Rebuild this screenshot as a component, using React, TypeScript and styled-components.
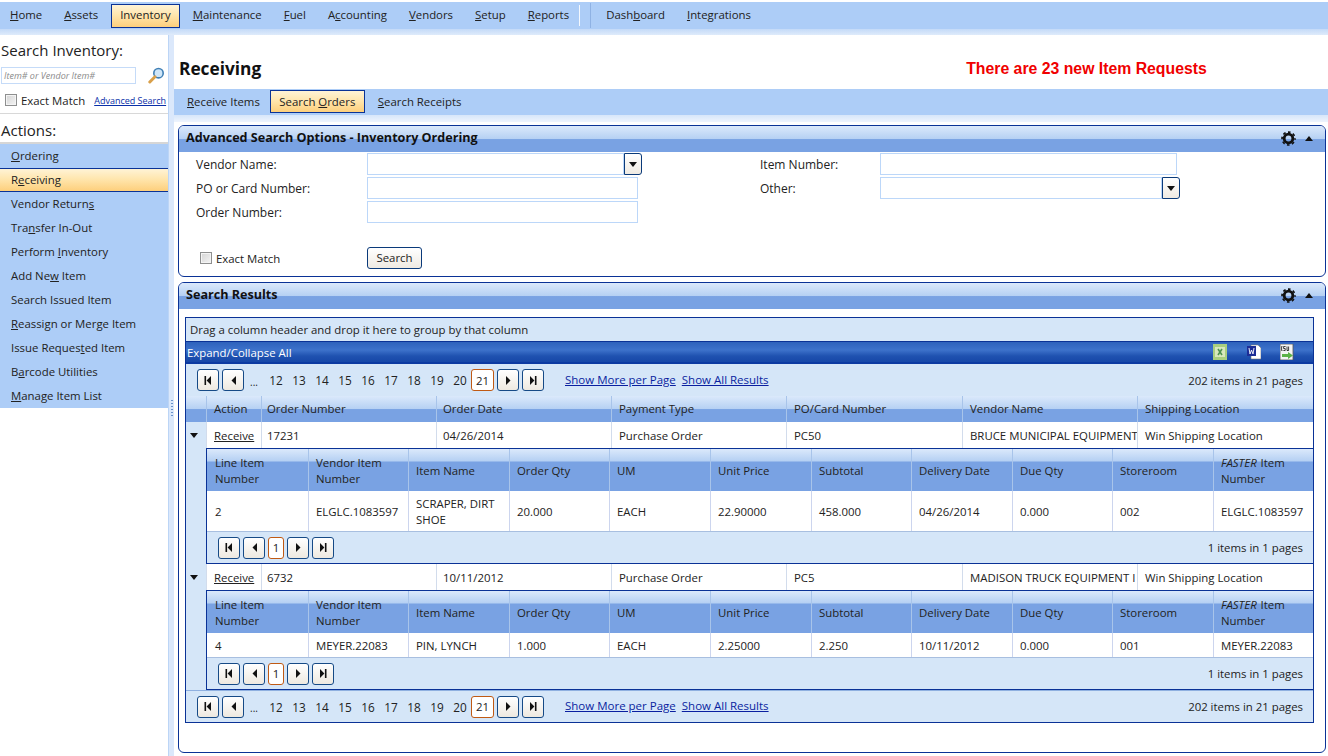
import React from 'react';
import styled, { createGlobalStyle } from 'styled-components';

const GlobalStyle = createGlobalStyle`
  html, body {
    margin: 0;
    padding: 0;
    background: #fff;
  }
  body {
    font-family: "Open Sans", "Noto Sans", "Liberation Sans", sans-serif;
    font-size: 11.4px;
    color: #222;
    overflow: hidden;
  }
  * {
    box-sizing: border-box;
  }
`;

const orangeGradient = 'linear-gradient(180deg, #fff3d6 0%, #ffe6ae 45%, #fdcf7c 100%)';
const barGradient = 'linear-gradient(180deg, #dbe9fb 0%, #b5d0f3 50%, #79a2e3 52%, #79a2e3 100%)';

type Accel = [string, string?, string?];

const label = ([before, mid, after]: Accel) => (
  <>
    {before}
    {mid ? <u>{mid}</u> : null}
    {after}
  </>
);

const menuItems: Accel[] = [
  ['', 'H', 'ome'],
  ['', 'A', 'ssets'],
  ['Inventory'],
  ['', 'M', 'aintenance'],
  ['', 'F', 'uel'],
  ['A', 'c', 'counting'],
  ['', 'V', 'endors'],
  ['', 'S', 'etup'],
  ['', 'R', 'eports'],
];

const actions: Accel[] = [
  ['', 'O', 'rdering'],
  ['R', 'e', 'ceiving'],
  ['Vendor Return', 's'],
  ['Tra', 'n', 'sfer In-Out'],
  ['Perform ', 'I', 'nventory'],
  ['Add Ne', 'w', ' Item'],
  ['Search Issued Item'],
  ['', 'R', 'eassign or Merge Item'],
  ['Issue Reques', 't', 'ed Item'],
  ['B', 'a', 'rcode Utilities'],
  ['', 'M', 'anage Item List'],
];

const masterCols = '20px 55px 175px 175px 175px 176px 175px 1fr';
const detailCols = '101px 100px 101px 100px 101px 101px 100px 101px 100px 101px 1fr';
const detailHead = [
  'Line Item Number',
  'Vendor Item Number',
  'Item Name',
  'Order Qty',
  'UM',
  'Unit Price',
  'Subtotal',
  'Delivery Date',
  'Due Qty',
  'Storeroom',
];
const pages = ['12', '13', '14', '15', '16', '17', '18', '19', '20'];

const First = () => (
  <svg width="8" height="9" viewBox="0 0 8 9">
    <path d="M0.5 0h1.6v9H0.5zM7 0v9L2.6 4.5z" fill="#111" />
  </svg>
);
const Prev = () => (
  <svg width="5" height="9" viewBox="0 0 5 9">
    <path d="M5 0v9L0.5 4.5z" fill="#111" />
  </svg>
);
const Next = () => (
  <svg width="5" height="9" viewBox="0 0 5 9">
    <path d="M0 0v9l4.5-4.5z" fill="#111" />
  </svg>
);
const Last = () => (
  <svg width="8" height="9" viewBox="0 0 8 9">
    <path d="M1 0v9l4.4-4.5zM5.9 0h1.6v9H5.9z" fill="#111" />
  </svg>
);

const Pager: React.FC<{ small?: boolean }> = ({ small }) => (
  <PagerButtons>
    <PageBtn>
      <First />
    </PageBtn>
    <PageBtn>
      <Prev />
    </PageBtn>
    {small ? null : <Dots>...</Dots>}
    {small ? null : pages.map((p) => <PageNum key={p}>{p}</PageNum>)}
    <Current $small={small}>{small ? '1' : '21'}</Current>
    <PageBtn>
      <Next />
    </PageBtn>
    <PageBtn>
      <Last />
    </PageBtn>
  </PagerButtons>
);

const MainPager: React.FC<{ bottom?: boolean }> = ({ bottom }) => (
  <MainPagerRow $bottom={bottom}>
    <Pager />
    <PagerLinks>
      <a>Show More per Page</a>
      <a>Show All Results</a>
    </PagerLinks>
    <Count>202 items in 21 pages</Count>
  </MainPagerRow>
);

type DetailProps = {
  row: string[];
  tall?: boolean;
};

const Detail: React.FC<DetailProps> = ({ row, tall }) => (
  <DetailWrap>
    <DetailHead>
      {detailHead.map((h) => (
        <DetailHeadCell key={h}>{h}</DetailHeadCell>
      ))}
      <DetailHeadCell>
        <span>
          <Faster>FASTER</Faster> Item
          <br />
          Number
        </span>
      </DetailHeadCell>
    </DetailHead>
    <DetailRow $tall={tall}>
      {row.map((c, i) => (
        <DetailCell key={i}>{c}</DetailCell>
      ))}
    </DetailRow>
    <DetailPager>
      <Pager small />
      <Count>1 items in 1 pages</Count>
    </DetailPager>
  </DetailWrap>
);

const MasterRow: React.FC<{ cells: string[] }> = ({ cells }) => (
  <MasterRowWrap>
    <Toggle>
      <svg width="8" height="5" viewBox="0 0 8 5">
        <path d="M0 0h8L4 5z" fill="#111" />
      </svg>
    </Toggle>
    <MasterCell>
      <u>Receive</u>
    </MasterCell>
    {cells.map((c, i) => (
      <MasterCell key={i}>{c}</MasterCell>
    ))}
  </MasterRowWrap>
);

const PanelTools = () => (
  <Tools>
    <svg width="15" height="15" viewBox="0 0 16 16">
      <circle cx="8" cy="8" r="4.6" fill="none" stroke="#111" strokeWidth="3" />
      <circle cx="8" cy="8" r="6.9" fill="none" stroke="#111" strokeWidth="1.8" strokeDasharray="2.8 2.62" strokeDashoffset="1.4" />
    </svg>
    <svg width="8" height="5" viewBox="0 0 8 5">
      <path d="M0 5h8L4 0z" fill="#111" />
    </svg>
  </Tools>
);

const ComboArrow = () => (
  <ComboBtn>
    <svg width="8" height="5" viewBox="0 0 8 5">
      <path d="M0 0h8L4 5z" fill="#111" />
    </svg>
  </ComboBtn>
);

export default function App() {
  return (
    <Page>
      <GlobalStyle />
      <TopBar>
        {menuItems.map((m) => (
          <MenuItem key={m.join('')} $active={m[0] === 'Inventory'}>
            {label(m)}
          </MenuItem>
        ))}
        <MenuDivider />
        <MenuDividerDark />
        <MenuItem>
          Dash<u>b</u>oard
        </MenuItem>
        <MenuItem>
          <u>I</u>ntegrations
        </MenuItem>
      </TopBar>
      <Shade />
      <Body>
        <Sidebar>
          <SideTitle>Search Inventory:</SideTitle>
          <SearchRow>
            <SearchInput>Item# or Vendor Item#</SearchInput>
            <svg width="17" height="17" viewBox="0 0 17 17">
              <circle cx="10.5" cy="6.2" r="4.7" fill="#cfe6f8" stroke="#3f7fb5" strokeWidth="1.6" />
              <path d="M7 9.8L1.8 15" stroke="#d9a04a" strokeWidth="3" strokeLinecap="round" />
            </svg>
          </SearchRow>
          <MatchRow>
            <CheckBox />
            <span>Exact Match</span>
            <SmallLink>Advanced Search</SmallLink>
          </MatchRow>
          <ActionsTitle>Actions:</ActionsTitle>
          <ActionList>
            {actions.map((a) => (
              <ActionItem key={a.join('')} $active={a.join('') === 'Receiving'}>
                {label(a)}
              </ActionItem>
            ))}
          </ActionList>
        </Sidebar>
        <Splitter>
          <Grip />
        </Splitter>
        <Main>
          <TitleRow>
            <h1>Receiving</h1>
            <Notice>There are 23 new Item Requests</Notice>
          </TitleRow>
          <Tabs>
            <Tab>
              <u>R</u>eceive Items
            </Tab>
            <Tab $active>
              Search <u>O</u>rders
            </Tab>
            <Tab>
              <u>S</u>earch Receipts
            </Tab>
          </Tabs>
          <TabShade />
          <Panel>
            <PanelHead>
              <PanelTitle>Advanced Search Options - Inventory Ordering</PanelTitle>
              <PanelTools />
            </PanelHead>
            <SearchForm>
              <FormLabel>Vendor Name:</FormLabel>
              <ComboField>
                <TextField $width={257} />
                <ComboArrow />
              </ComboField>
              <FormLabel>Item Number:</FormLabel>
              <TextField $width={297} />
              <FormLabel>PO or Card Number:</FormLabel>
              <TextField $width={271} />
              <FormLabel>Other:</FormLabel>
              <ComboField>
                <TextField $width={282} />
                <ComboArrow />
              </ComboField>
              <FormLabel>Order Number:</FormLabel>
              <TextField $width={271} />
            </SearchForm>
            <SearchActions>
              <FormCheck>
                <CheckBox />
                <span>Exact Match</span>
              </FormCheck>
              <SearchButton>Search</SearchButton>
            </SearchActions>
          </Panel>
          <ResultsPanel>
            <PanelHead>
              <PanelTitle>Search Results</PanelTitle>
              <PanelTools />
            </PanelHead>
            <Grid>
              <GroupBar>Drag a column header and drop it here to group by that column</GroupBar>
              <ExpandBar>
                Expand/Collapse All
                <ExportIcons>
                  <svg width="14" height="16" viewBox="0 0 14 16">
                    <rect width="14" height="16" fill="#a9cf7f" />
                    <path d="M2 3h10v10H2z" fill="#d8e8bd" />
                    <path d="M5 5l4 6M9 5l-4 6" stroke="#4f9350" strokeWidth="1.6" />
                  </svg>
                  <svg width="14" height="16" viewBox="0 0 14 16">
                    <path d="M4 1h7l3 3v11H4z" fill="#fff" stroke="#777" strokeWidth="0.6" />
                    <rect y="2" width="9" height="10" fill="#1c2d96" />
                    <path d="M2 4l1 6 1.5-4L6 10l1-6" stroke="#fff" strokeWidth="0.9" fill="none" />
                  </svg>
                  <svg width="14" height="16" viewBox="0 0 14 16">
                    <rect width="13" height="16" fill="#f4f4f4" stroke="#555" strokeWidth="0.8" />
                    <path d="M2.4 2.5H1.6v4h.8M5.6 2.5h-2v2h1.6v2H3.4M7 2.5v4h1.6v-4" stroke="#111" strokeWidth="0.8" fill="none" />
                    <path d="M2 10h6V8l5 3.5L8 15v-2H2z" fill="#5cb247" />
                  </svg>
                </ExportIcons>
              </ExpandBar>
              <MainPager />
              <MasterHead>
                <MasterHeadCell />
                {['Action', 'Order Number', 'Order Date', 'Payment Type', 'PO/Card Number', 'Vendor Name', 'Shipping Location'].map((h) => (
                  <MasterHeadCell key={h}>{h}</MasterHeadCell>
                ))}
              </MasterHead>
              <MasterRow
                cells={['17231', '04/26/2014', 'Purchase Order', 'PC50', 'BRUCE MUNICIPAL EQUIPMENT', 'Win Shipping Location']}
              />
              <NestedRow>
                <Detail
                  tall
                  row={['2', 'ELGLC.1083597', 'SCRAPER, DIRT SHOE', '20.000', 'EACH', '22.90000', '458.000', '04/26/2014', '0.000', '002', 'ELGLC.1083597']}
                />
              </NestedRow>
              <MasterRow
                cells={['6732', '10/11/2012', 'Purchase Order', 'PC5', 'MADISON TRUCK EQUIPMENT I', 'Win Shipping Location']}
              />
              <NestedRow>
                <Detail
                  row={['4', 'MEYER.22083', 'PIN, LYNCH', '1.000', 'EACH', '2.25000', '2.250', '10/11/2012', '0.000', '001', 'MEYER.22083']}
                />
              </NestedRow>
              <MainPager bottom />
            </Grid>
          </ResultsPanel>
        </Main>
      </Body>
    </Page>
  );
}

const Page = styled.div`
  width: 1328px;
  height: 756px;
  overflow: hidden;
`;

const TopBar = styled.div`
  height: 27px;
  margin-top: 2px;
  padding-left: 1px;
  background: #adcdf7;
  display: flex;
  align-items: center;
`;

const Shade = styled.div`
  height: 6px;
  background: linear-gradient(180deg, #c4daf8 0%, #dfebfb 100%);
`;

const MenuItem = styled.div<{ $active?: boolean }>`
  height: 24px;
  padding: 0 8px 2px;
  margin-right: 4px;
  display: flex;
  align-items: center;
  white-space: pre;
  border: 1px solid ${(p) => (p.$active ? '#0a3296' : 'transparent')};
  background: ${(p) => (p.$active ? orangeGradient : 'transparent')};
`;

const MenuDivider = styled.div`
  width: 1px;
  height: 21px;
  margin: 0 10px 0 -3px;
  background: #f4f8fe;
`;

const MenuDividerDark = styled.div`
  width: 1px;
  height: 25px;
  margin-right: 6px;
  background: #8fb2e4;
`;

const Body = styled.div`
  display: flex;
  height: 721px;
`;

const Sidebar = styled.div`
  width: 168px;
  flex: none;
`;

const SideTitle = styled.div`
  font-size: 15px;
  line-height: 20px;
  padding: 5px 0 0 1px;
`;

const SearchRow = styled.div`
  display: flex;
  align-items: center;
  gap: 12px;
  margin: 7px 0 0 1px;
`;

const SearchInput = styled.div`
  width: 135px;
  height: 17px;
  padding-left: 2px;
  border: 1px solid #c5dbf8;
  color: #8a8a8a;
  font-size: 9px;
  font-style: italic;
  line-height: 15px;
`;

const MatchRow = styled.div`
  height: 30px;
  display: flex;
  align-items: center;
  gap: 4px;
  padding: 3px 0 0 5px;
  border-bottom: 1px solid #d8d8d8;
  white-space: nowrap;
`;

const CheckBox = styled.div`
  width: 12px;
  height: 12px;
  flex: none;
  border: 1px solid #8e8f8f;
  background: linear-gradient(135deg, #d4d4d4, #f4f4f4);
  box-shadow: inset 0 0 0 1px #f4f4f4;
`;

const SmallLink = styled.a`
  margin-left: 5px;
  color: #0a2fa8;
  font-size: 9px;
  text-decoration: underline;
`;

const ActionsTitle = styled.div`
  font-size: 15px;
  line-height: 20px;
  padding: 6px 0 2px 1px;
  border-bottom: 2px solid #d6d6d6;
`;

const ActionList = styled.div`
  background: #adcdf7;
`;

const ActionItem = styled.div<{ $active?: boolean }>`
  height: 24px;
  padding: 0 0 2px 11px;
  display: flex;
  align-items: center;
  white-space: pre;
  border: solid ${(p) => (p.$active ? '#0a3296' : 'transparent')};
  border-width: 1px 0;
  background: ${(p) => (p.$active ? orangeGradient : 'transparent')};
`;

const Splitter = styled.div`
  width: 6px;
  flex: none;
  background: #dbe8fb;
  border-left: 1px solid #bcd5f6;
  display: flex;
  align-items: center;
  justify-content: center;
`;

const Grip = styled.div`
  width: 2px;
  height: 17px;
  margin-top: 26px;
  background: repeating-linear-gradient(180deg, #6b93cc 0 1px, transparent 1px 3px);
`;

const Main = styled.div`
  flex: 1;
  min-width: 0;
`;

const TitleRow = styled.div`
  height: 54px;
  padding: 12px 0 0 5px;
  display: flex;
  align-items: center;

  h1 {
    margin: 0;
    font-size: 17.3px;
    font-weight: 700;
    color: #111;
  }
`;

const Notice = styled.div`
  margin: 2px 0 0 705px;
  color: #f00000;
  font-size: 15.8px;
  font-weight: 700;
  font-family: "Liberation Sans", sans-serif;
`;

const Tabs = styled.div`
  height: 26px;
  background: #adcdf7;
  display: flex;
  align-items: flex-start;
  padding: 1px 0 0 4px;
`;

const Tab = styled.div<{ $active?: boolean }>`
  width: ${(p) => (p.$active ? '95px' : 'auto')};
  height: 23px;
  padding: 0 8px 1px;
  margin-right: ${(p) => (p.$active ? '4px' : '1px')};
  white-space: pre;
  display: flex;
  align-items: center;
  justify-content: center;
  border: 1px solid ${(p) => (p.$active ? '#0a3296' : 'transparent')};
  background: ${(p) => (p.$active ? orangeGradient : 'transparent')};
`;

const TabShade = styled(Shade)`
  height: 7px;
  background: linear-gradient(180deg, #d7e6fa 0%, #eef4fd 100%);
`;

const Panel = styled.div`
  height: 152px;
  margin: 3px 2px 5px 4px;
  border: 1px solid #0a3296;
  border-radius: 6px;
  overflow: hidden;
`;

const ResultsPanel = styled(Panel)`
  height: 471px;
  margin-top: 0;
  margin-bottom: 0;
`;

const PanelHead = styled.div`
  height: 26px;
  padding: 0 12px 0 7px;
  display: flex;
  align-items: center;
  justify-content: space-between;
  background: ${barGradient};
`;

const PanelTitle = styled.div`
  margin-bottom: 4px;
  font-weight: 700;
  font-size: 12.6px;
  color: #111;
`;

const Tools = styled.div`
  display: flex;
  align-items: center;
  gap: 9px;
  margin-bottom: 2px;
`;

const SearchForm = styled.div`
  display: grid;
  grid-template-columns: 171px 393px 120px 1fr;
  grid-auto-rows: 24px;
  padding: 1px 0 0 17px;
`;

const FormLabel = styled.div`
  display: flex;
  align-items: center;
  padding-bottom: 2px;
  font-size: 12px;
  color: #222;
`;

const TextField = styled.div<{ $width: number }>`
  width: ${(p) => p.$width}px;
  height: 22px;
  border: 1px solid #bcd7f9;
`;

const ComboField = styled.div`
  display: flex;
`;

const ComboBtn = styled.div`
  width: 18px;
  height: 22px;
  display: flex;
  align-items: center;
  justify-content: center;
  border: 1px solid #0a3a7a;
  border-radius: 0 3px 3px 0;
  background: linear-gradient(180deg, #ffffff, #efeae2);
`;

const SearchActions = styled.div`
  display: grid;
  grid-template-columns: 167px 1fr;
  align-items: center;
  padding: 22px 0 0 21px;
`;

const FormCheck = styled.div`
  display: flex;
  align-items: center;
  gap: 4px;
`;

const SearchButton = styled.div`
  width: 55px;
  height: 22px;
  padding-bottom: 1px;
  display: flex;
  align-items: center;
  justify-content: center;
  border: 1px solid #0a3a7a;
  border-radius: 3px;
  background: linear-gradient(180deg, #ffffff, #efeae2);
`;

const Grid = styled.div`
  margin: 8px 11px 0 6px;
  border: 1px solid #0a3296;
  background: #d5e6f8;
`;

const GroupBar = styled.div`
  height: 23px;
  padding: 0 0 1px 4px;
  display: flex;
  align-items: center;
`;

const ExpandBar = styled.div`
  height: 23px;
  padding: 1px 19px 0 1px;
  display: flex;
  align-items: center;
  justify-content: space-between;
  color: #fff;
  border-top: 1px solid #0a3296;
  border-bottom: 2px solid #0c3aa2;
  background: linear-gradient(180deg, #2e62bc 0%, #3d72cb 40%, #1f52b0 70%, #1647a8 100%);
`;

const ExportIcons = styled.div`
  display: flex;
  gap: 19.5px;
  margin-top: -1px;
`;

const MainPagerRow = styled.div<{ $bottom?: boolean }>`
  height: 32px;
  padding: 0 10px 0 11px;
  display: flex;
  align-items: center;
  border-top: ${(p) => (p.$bottom ? '1px solid #8fb0e0' : '0')};
`;

const PagerButtons = styled.div`
  display: flex;
  align-items: center;
  gap: 3px;
`;

const PageBtn = styled.div`
  width: 22px;
  height: 22px;
  display: flex;
  align-items: center;
  justify-content: center;
  border: 1px solid #164a86;
  border-radius: 3px;
  background: linear-gradient(180deg, #ffffff, #eee9e0);
`;

const Dots = styled.span`
  width: 13px;
  margin-left: 3px;
  font-size: 10px;
  padding-top: 3px;
`;

const PageNum = styled.span`
  width: 20px;
  text-align: center;
  font-size: 11.8px;
`;

const Current = styled.span<{ $small?: boolean }>`
  width: ${(p) => (p.$small ? '16px' : '23px')};
  height: 22px;
  margin-left: ${(p) => (p.$small ? '0' : '-2px')};
  display: flex;
  align-items: center;
  justify-content: center;
  border: 1px solid #c05a14;
  border-radius: 3px;
  background: #fff;
`;

const PagerLinks = styled.div`
  margin: -2px 0 0 21px;
  display: flex;
  gap: 6px;

  a {
    color: #0a1fa0;
    font-size: 11.5px;
    text-decoration: underline;
  }
`;

const Count = styled.div`
  margin-left: auto;
  white-space: nowrap;
`;

const MasterHead = styled.div`
  height: 26px;
  display: grid;
  grid-template-columns: ${masterCols};
  background: ${barGradient};
`;

const MasterHeadCell = styled.div`
  padding: 0 0 1px 7px;
  display: flex;
  align-items: center;
  border-left: 1px solid #a8c4ea;
  white-space: nowrap;

  &:first-child {
    border-left: 0;
  }
  &:nth-child(3) {
    padding-left: 5px;
  }
  &:nth-child(4) {
    padding-left: 6px;
  }
`;

const MasterRowWrap = styled.div`
  height: 26px;
  display: grid;
  grid-template-columns: ${masterCols};
`;

const Toggle = styled.div`
  display: flex;
  align-items: center;
  justify-content: center;
  padding-right: 4px;
`;

const MasterCell = styled.div`
  padding-left: 7px;
  display: flex;
  align-items: center;
  overflow: hidden;
  white-space: pre;
  background: #fff;
  border-left: 1px solid #d2dcec;

  &:nth-child(3) {
    padding-left: 5px;
  }
  &:nth-child(4) {
    padding-left: 6px;
  }
`;

const NestedRow = styled.div`
  padding-left: 20px;
`;

const DetailWrap = styled.div`
  border: solid #0a3296;
  border-width: 1px 0 1px 1px;
`;

const DetailHead = styled.div`
  height: 42px;
  display: grid;
  grid-template-columns: ${detailCols};
  background: linear-gradient(180deg, #dbe9fb 0, #b5d0f3 12px, #79a2e3 13px, #79a2e3 100%);
`;

const DetailHeadCell = styled.div`
  padding: 1px 6px 0 7px;
  display: flex;
  align-items: center;
  line-height: 16px;
  border-left: 1px solid #a8c4ea;

  &:first-child {
    border-left: 0;
    padding-left: 8px;
  }
`;

const Faster = styled.span`
  font-style: italic;
  padding-right: 1px;
`;

const DetailRow = styled.div<{ $tall?: boolean }>`
  height: ${(p) => (p.$tall ? '40px' : '24px')};
  display: grid;
  grid-template-columns: ${detailCols};
  background: #fff;
`;

const DetailCell = styled.div`
  padding: 1px 6px 0 7px;
  display: flex;
  align-items: center;
  line-height: 16px;
  overflow: hidden;
  border-left: 1px solid #ccd5ee;
  white-space: pre-wrap;

  &:first-child {
    border-left: 0;
    padding-left: 8px;
  }
`;

const DetailPager = styled.div`
  height: 32px;
  padding: 0 10px 0 11px;
  display: flex;
  align-items: center;
  border-top: 1px solid #a8bfe0;
`;
